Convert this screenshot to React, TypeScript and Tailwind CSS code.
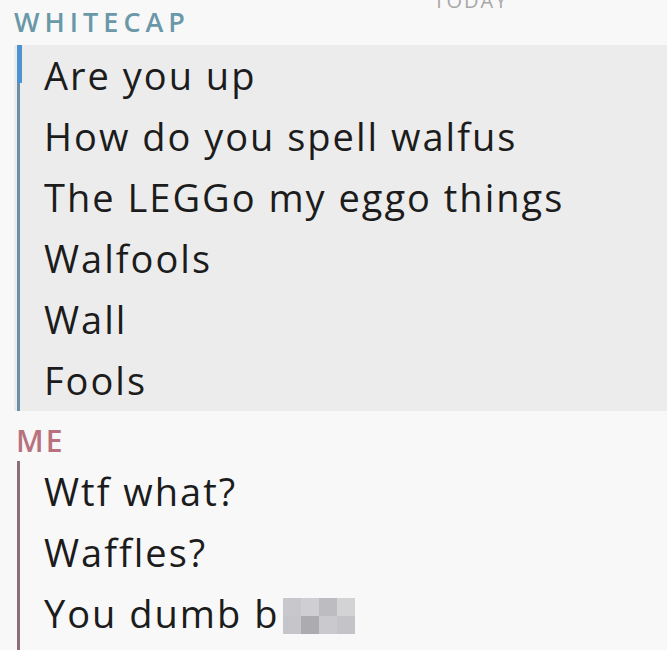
import React from 'react';

const font = { fontFamily: '"Open Sans", Lato, sans-serif' };

const theirs = [
  'Are you up',
  'How do you spell walfus',
  'The LEGGo my eggo things',
  'Walfools',
  'Wall',
  'Fools',
];

const mine = ['Wtf what?', 'Waffles?'];

const pixels = [
  ['#c8c8cc', '#cfcfd3', '#bdbdc1', '#d3d3d5'],
  ['#c6c6ca', '#acacb0', '#cacace', '#c4c4c8'],
];

function Censor() {
  return (
    <span className="ml-[4px] inline-grid grid-cols-4 align-[12px]">
      {pixels.flat().map((c, i) => (
        <span key={i} className="h-[18px] w-[18px]" style={{ backgroundColor: c }} />
      ))}
    </span>
  );
}

const line = 'h-[61px] text-[38px] font-medium leading-[60px] tracking-[2px]';

export default function App() {
  return (
    <div className="h-[650px] w-[667px] overflow-hidden bg-[#f8f8f8] text-[#1c1c1c]" style={font}>
      <div className="-mt-[14px] flex h-[22px] justify-center pl-[275px] text-[20px] tracking-[2px] text-[#a8a8a8]">
        TODAY
      </div>

      <div className="mt-[1px] pl-[14px] text-[27px] font-semibold leading-[26px] tracking-[5px] text-[#6a98a8]">WHITECAP</div>

      <div className="mt-[10px] ml-[14px] flex bg-[#ececec]">
        <div className="ml-[3px] flex w-[5px] flex-col">
          <div className="h-[38px] w-[5px] bg-[#4c93cf]" />
          <div className="w-[3px] flex-1 bg-[#6b8fa7]" />
        </div>
        <div className="pl-[22px]">
          {theirs.map((t) => (
            <div key={t} className={line}>
              {t}
            </div>
          ))}
        </div>
      </div>

      <div className="mt-[16px] pl-[16px] text-[30px] font-semibold leading-[28px] tracking-[2px] text-[#b8727f]">ME</div>

      <div className="mt-[6px] ml-[17px] flex">
        <div className="w-[3px] bg-[#8d6e74]" />
        <div className="pl-[24px]">
          {mine.map((t) => (
            <div key={t} className={line}>
              {t}
            </div>
          ))}
          <div className="h-[80px] text-[38px] font-medium leading-[60px] tracking-[2px]">
            You dumb b
            <Censor />
          </div>
        </div>
      </div>
    </div>
  );
}
